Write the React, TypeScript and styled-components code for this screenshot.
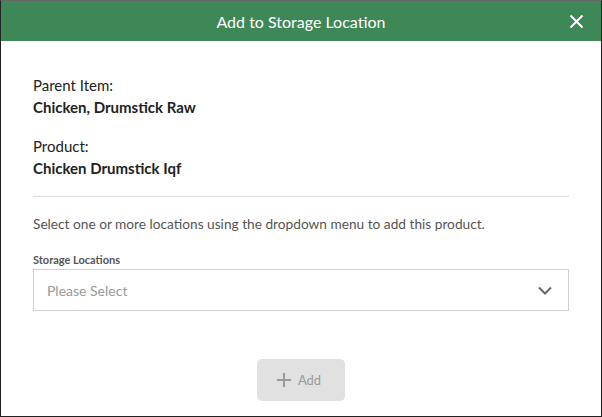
import React from "react";
import styled, { createGlobalStyle } from "styled-components";

const GlobalStyle = createGlobalStyle`
  html, body {
    margin: 0;
    padding: 0;
    background: #fff;
    font-family: Lato, "Open Sans", sans-serif;
  }
  * { box-sizing: border-box; }
`;

const Modal = styled.div`
  width: 602px;
  height: 417px;
  border: 1px solid #222;
  border-top-color: #666;
  display: flex;
  flex-direction: column;
  background: #fff;
`;

const Header = styled.div`
  height: 40px;
  background: #3e8756;
  color: #fff;
  display: flex;
  align-items: center;
  justify-content: center;
  position: relative;
  font-size: 16px;
`;

const CloseButton = styled.button`
  position: absolute;
  right: 16px;
  top: 11px;
  width: 18px;
  height: 18px;
  padding: 0;
  border: none;
  background: none;
  cursor: pointer;
  display: flex;
  align-items: center;
  justify-content: center;
`;

const Body = styled.div`
  flex: 1;
  padding: 35px 32px 0 32px;
  display: flex;
  flex-direction: column;
`;

const Field = styled.div`
  display: flex;
  flex-direction: column;
  gap: 4px;
  margin-bottom: 21px;
  color: #222;
  font-size: 15px;
  line-height: 18px;
`;

const Value = styled.div`
  font-weight: 700;
`;

const Divider = styled.hr`
  border: none;
  border-top: 1px solid #dcdcdc;
  margin: -2px 0 18px 0;
  width: 100%;
`;

const Hint = styled.p`
  margin: 0 0 20px 0;
  font-size: 13.7px;
  line-height: 18px;
  color: #555;
`;

const Label = styled.label`
  font-size: 11px;
  font-weight: 700;
  color: #555;
  line-height: 14px;
  margin-bottom: 2px;
`;

const Select = styled.div`
  height: 42px;
  border: 1px solid #cfcfcf;
  display: flex;
  align-items: center;
  justify-content: space-between;
  padding: 0 16px 0 13px;
  font-size: 14px;
  color: #999;
`;

const Footer = styled.div`
  display: flex;
  justify-content: center;
  margin-top: 48px;
`;

const AddButton = styled.button`
  width: 88px;
  height: 42px;
  border: none;
  border-radius: 5px;
  background: #e1e1e1;
  color: #9a9a9a;
  font-family: Lato, "Open Sans", sans-serif;
  font-size: 13px;
  display: flex;
  align-items: center;
  justify-content: center;
  gap: 7px;
  padding: 0 4px 0 0;
`;

export default function App() {
  return (
    <>
      <GlobalStyle />
      <Modal>
        <Header>
          Add to Storage Location
          <CloseButton aria-label="Close">
            <svg width="15" height="15" viewBox="0 0 15 15">
              <path d="M1.5 1.5 L13.5 13.5 M13.5 1.5 L1.5 13.5" stroke="#fff" strokeWidth="2" />
            </svg>
          </CloseButton>
        </Header>
        <Body>
          <Field>
            <span>Parent Item:</span>
            <Value>Chicken, Drumstick Raw</Value>
          </Field>
          <Field>
            <span>Product:</span>
            <Value>Chicken Drumstick Iqf</Value>
          </Field>
          <Divider />
          <Hint>Select one or more locations using the dropdown menu to add this product.</Hint>
          <Label>Storage Locations</Label>
          <Select>
            Please Select
            <svg width="14" height="9" viewBox="0 0 14 9">
              <path d="M1 1.5 L7 7.5 L13 1.5" stroke="#666" strokeWidth="2" fill="none" />
            </svg>
          </Select>
          <Footer>
            <AddButton disabled>
              <svg width="14" height="14" viewBox="0 0 14 14">
                <path d="M7 0 V14 M0 7 H14" stroke="#9a9a9a" strokeWidth="2" />
              </svg>
              Add
            </AddButton>
          </Footer>
        </Body>
      </Modal>
    </>
  );
}
